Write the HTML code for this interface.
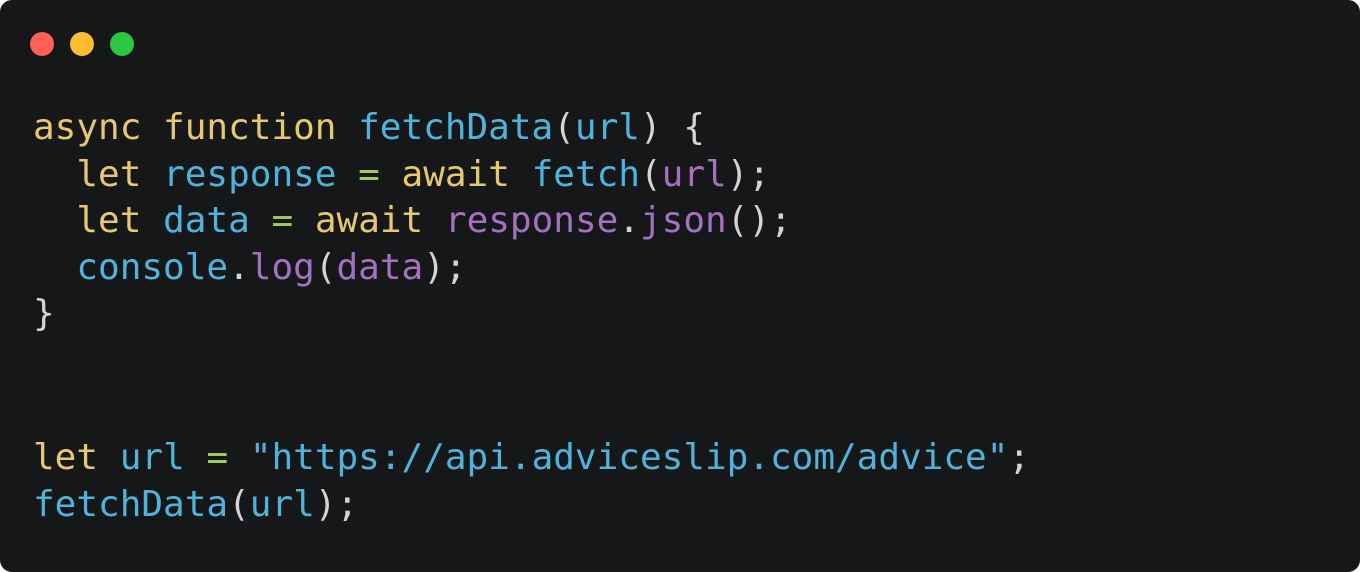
<!DOCTYPE html>
<html><head><style>
html,body{margin:0;padding:0;background:#fff;}
.card{position:absolute;left:0;top:0;width:1360px;height:572px;background:#161719;border-radius:12px;overflow:hidden;}
.dot{position:absolute;top:32px;width:24px;height:24px;border-radius:50%;}
pre{position:absolute;left:33px;top:105px;margin:0;font-family:"DejaVu Sans Mono","Liberation Mono",monospace;font-size:36px;line-height:46.6px;color:#d4d4d4;}
.y{color:#e6c86e}.b{color:#4fb4dc}.g{color:#9cc957}.p{color:#a371c0}.w{color:#d4d4d4}
</style></head><body>
<div class="card">
<div class="dot" style="left:30px;background:#fe5f57"></div>
<div class="dot" style="left:70px;background:#febc2e"></div>
<div class="dot" style="left:110px;background:#28c840"></div>
<pre><span class="y">async function</span> <span class="b">fetchData</span>(<span class="b">url</span>) {
  <span class="y">let</span> <span class="b">response</span> <span class="g">=</span> <span class="y">await</span> <span class="b">fetch</span>(<span class="p">url</span>);
  <span class="y">let</span> <span class="b">data</span> <span class="g">=</span> <span class="y">await</span> <span class="p">response</span>.<span class="p">json</span>();
  <span class="b">console</span>.<span class="p">log</span>(<span class="p">data</span>);
}</pre>
<pre style="top:435px"><span class="y">let</span> <span class="b">url</span> <span class="g">=</span> <span class="b">"https://api.adviceslip.com/advice"</span>;
<span class="b">fetchData</span>(<span class="b">url</span>);</pre>
</div>
</body></html>
